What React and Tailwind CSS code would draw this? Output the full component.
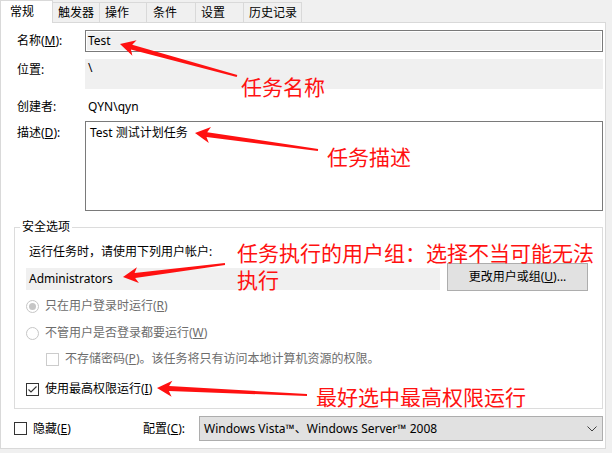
import React from "react";

function arrowPoints(tail, tip, o = {}) {
  const hl = o.hl ?? 12;
  const hw = o.hw ?? 8;
  const sw = o.sw ?? 5;
  const tw = o.tw ?? 2;
  const dx = tip[0] - tail[0];
  const dy = tip[1] - tail[1];
  const len = Math.hypot(dx, dy);
  const ux = dx / len;
  const uy = dy / len;
  const nx = -uy;
  const ny = ux;
  const p = (x, y) => `${x.toFixed(1)},${y.toFixed(1)}`;
  const neckX = tip[0] - ux * hl;
  const neckY = tip[1] - uy * hl;
  const barbX = tip[0] - ux * (hl + 3);
  const barbY = tip[1] - uy * (hl + 3);
  return [
    p(tail[0] + (nx * tw) / 2, tail[1] + (ny * tw) / 2),
    p(neckX + (nx * sw) / 2, neckY + (ny * sw) / 2),
    p(barbX + nx * hw, barbY + ny * hw),
    p(tip[0], tip[1]),
    p(barbX - nx * hw, barbY - ny * hw),
    p(neckX - (nx * sw) / 2, neckY - (ny * sw) / 2),
    p(tail[0] - (nx * tw) / 2, tail[1] - (ny * tw) / 2),
  ].join(" ");
}

const arrows = [
  { tail: [237, 76], tip: [120, 44] },
  { tail: [318, 150], tip: [195, 133] },
  { tail: [225, 264], tip: [123, 277] },
  { tail: [307, 395], tip: [157, 388] },
];

function Radio({ checked }) {
  return (
    <span className="relative flex h-[13px] w-[13px] shrink-0 items-center justify-center rounded-full border border-[#c6c6c6] bg-white">
      {checked && <span className="h-[7px] w-[7px] rounded-full bg-[#c6c6c6]" />}
    </span>
  );
}

function Check({ checked, disabled }) {
  return (
    <span
      className={
        "flex h-[13px] w-[13px] shrink-0 items-center justify-center border bg-white " +
        (disabled ? "border-[#cccccc]" : "border-[#333333]")
      }
    >
      {checked && (
        <svg width="11" height="11" viewBox="0 0 11 11">
          <polyline points="1.5,5.5 4,8 9.5,2.5" fill="none" stroke="#333333" strokeWidth="1.1" />
        </svg>
      )}
    </span>
  );
}

export default function App() {
  return (
    <div className="relative h-[453px] w-[612px] overflow-hidden bg-[#f0f0f0] font-['Noto_Sans','Noto_Sans_CJK_SC',sans-serif] text-[12px] leading-[16px] text-black">
      {/* Tabs */}
      <div className="flex h-[22px] items-end">
        <div className="relative z-10 h-[23px] w-[53px] self-start border-x border-t border-[#d9d9d9] bg-white pl-[9px] pt-[3px]">
          常规
        </div>
        <div className="h-[20px] w-[47px] border-r border-t border-[#d9d9d9] pl-[5px] pt-[2px]">触发器</div>
        <div className="h-[20px] w-[47px] border-r border-t border-[#d9d9d9] pl-[5px] pt-[2px]">操作</div>
        <div className="h-[20px] w-[49px] border-r border-t border-[#d9d9d9] pl-[6px] pt-[2px]">条件</div>
        <div className="h-[20px] w-[48px] border-r border-t border-[#d9d9d9] pl-[5px] pt-[2px]">设置</div>
        <div className="h-[20px] w-[58px] border-r border-t border-[#d9d9d9] pl-[5px] pt-[2px]">历史记录</div>
      </div>

      {/* Panel */}
      <div className="h-[427px] w-[606px] border border-[#d9d9d9] bg-white pt-[7px]">
        {/* Name */}
        <div className="flex h-[22px] items-center">
          <div className="w-[84px] shrink-0 pl-[16px]">
            名称(<u>M</u>):
          </div>
          <div className="flex h-[22px] w-[518px] items-center border border-[#7a7a7a] bg-[#f0f0f0] pl-[2px] shadow-[inset_0_0_0_1px_#ffffff]">
            Test
          </div>
        </div>
        {/* Location */}
        <div className="mt-[7px] flex h-[30px]">
          <div className="w-[84px] shrink-0 pl-[16px] pt-[3px]">位置:</div>
          <div className="h-[30px] w-[518px] bg-[#f0f0f0] pl-[3px] pt-[1px]">\</div>
        </div>
        {/* Creator */}
        <div className="mt-[10px] flex h-[16px]">
          <div className="w-[84px] shrink-0 pl-[16px]">创建者:</div>
          <div className="pl-[3px]">QYN\qyn</div>
        </div>
        {/* Description */}
        <div className="mt-[6px] flex h-[90px]">
          <div className="w-[84px] shrink-0 pl-[16px] pt-[4px]">
            描述(<u>D</u>):
          </div>
          <div className="h-[90px] w-[518px] border border-[#7a7a7a] bg-white pl-[4px] pt-[3px]">Test 测试计划任务</div>
        </div>

        {/* Security options */}
        <fieldset className="ml-[13px] mt-[8px] w-[589px] border border-[#dcdcdc] pb-[11px]">
          <legend className="ml-[5px] px-[2px]">安全选项</legend>
          <div className="pl-[11px]">
            <div className="ml-[3px] mt-[9px] h-[16px]">运行任务时，请使用下列用户帐户:</div>
            <div className="mt-[3px] flex h-[28px] items-end">
              <div className="mb-[1px] h-[22px] w-[414px] bg-[#f0f0f0] pl-[3px] leading-[22px]">Administrators</div>
              <div className="ml-[7px] flex h-[28px] w-[141px] items-center justify-center border border-[#adadad] bg-[#e1e1e1]">
                更改用户或组(<u>U</u>)...
              </div>
            </div>
            <div className="mt-[7px] flex h-[16px] items-center text-[#6d6d6d]">
              <Radio checked />
              <span className="ml-[6px]">
                只在用户登录时运行(<u>R</u>)
              </span>
            </div>
            <div className="mt-[11px] flex h-[16px] items-center text-[#6d6d6d]">
              <Radio />
              <span className="ml-[6px]">
                不管用户是否登录都要运行(<u>W</u>)
              </span>
            </div>
            <div className="ml-[20px] mt-[10px] flex h-[16px] items-center text-[#6d6d6d]">
              <Check disabled />
              <span className="ml-[6px]">
                不存储密码(<u>P</u>)。该任务将只有访问本地计算机资源的权限。
              </span>
            </div>
            <div className="mt-[14px] flex h-[16px] items-center">
              <Check checked />
              <span className="ml-[6px]">
                使用最高权限运行(<u>I</u>)
              </span>
            </div>
          </div>
        </fieldset>

        {/* Bottom row */}
        <div className="mt-[7px] flex h-[25px] items-center">
          <div className="ml-[13px] flex w-[129px] items-center">
            <Check />
            <span className="ml-[6px]">
              隐藏(<u>E</u>)
            </span>
          </div>
          <div className="w-[56px]">
            配置(<u>C</u>):
          </div>
          <div className="flex h-[25px] w-[404px] items-center justify-between border border-[#adadad] bg-[#e1e1e1] pl-[4px] pr-[5px]">
            <span>Windows Vista™、Windows Server™ 2008</span>
            <svg width="10" height="6" viewBox="0 0 10 6">
              <polyline points="0.5,0.5 5,5 9.5,0.5" fill="none" stroke="#404040" strokeWidth="1" />
            </svg>
          </div>
        </div>
      </div>

      {/* Annotations overlay */}
      <svg className="pointer-events-none absolute left-0 top-0" width="612" height="453">
        {arrows.map((a, i) => (
          <polygon key={i} points={arrowPoints(a.tail, a.tip)} fill="#ff1111" />
        ))}
      </svg>
      <div className="pointer-events-none absolute left-[241px] top-[74px] whitespace-nowrap font-['Noto_Sans_CJK_SC',sans-serif] text-[21px] leading-[24px] text-[#ff1111]">
        任务名称
      </div>
      <div className="pointer-events-none absolute left-[327px] top-[144px] whitespace-nowrap font-['Noto_Sans_CJK_SC',sans-serif] text-[21px] leading-[24px] text-[#ff1111]">
        任务描述
      </div>
      <div className="pointer-events-none absolute left-[237px] top-[240px] whitespace-nowrap font-['Noto_Sans_CJK_SC',sans-serif] text-[21px] leading-[24px] text-[#ff1111]">
        任务执行的用户组：选择不当可能无法
      </div>
      <div className="pointer-events-none absolute left-[237px] top-[267px] whitespace-nowrap font-['Noto_Sans_CJK_SC',sans-serif] text-[21px] leading-[24px] text-[#ff1111]">
        执行
      </div>
      <div className="pointer-events-none absolute left-[316px] top-[384px] whitespace-nowrap font-['Noto_Sans_CJK_SC',sans-serif] text-[21px] leading-[24px] text-[#ff1111]">
        最好选中最高权限运行
      </div>
    </div>
  );
}
